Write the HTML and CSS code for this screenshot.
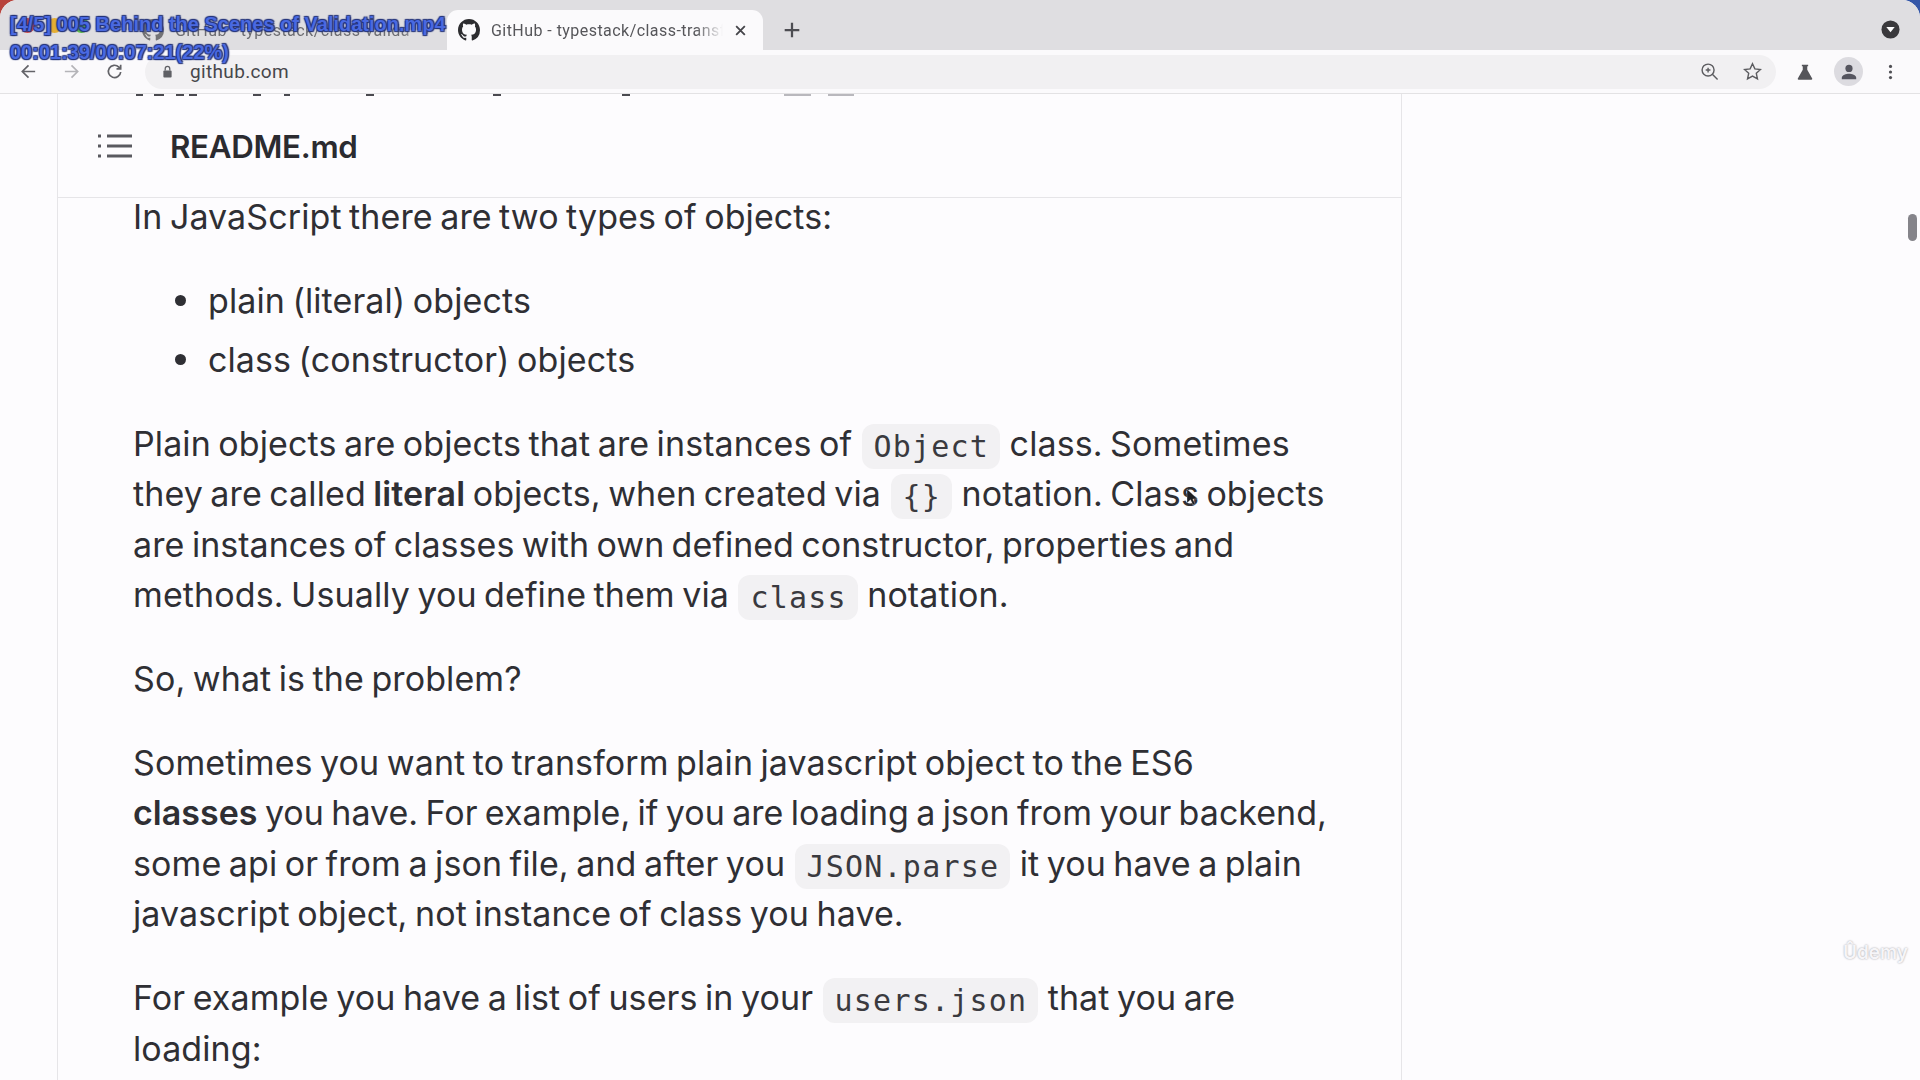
FILE: index.html
```html
<!DOCTYPE html>
<html lang="en">
<head>
    <meta charset="UTF-8">
    <title>GitHub - typestack/class-transformer</title>
    <link rel="stylesheet" href="styles.css">
</head>
<body>
    <div class="window">
        <div class="tabbar">
            <div class="lights">
                <span class="light red"></span>
                <span class="light yellow"></span>
                <span class="light green"></span>
            </div>
            <div class="tab">
                <svg class="tab-icon" viewBox="0 0 16 16"><use href="#mark"/></svg>
                <span class="tab-title">GitHub - typestack/class-valida</span>
            </div>
            <div class="tab active">
                <svg class="tab-icon" viewBox="0 0 16 16">
                    <path id="mark" d="M8 0C3.58 0 0 3.58 0 8c0 3.54 2.29 6.53 5.47 7.59.4.07.55-.17.55-.38 0-.19-.01-.82-.01-1.49-2.01.37-2.53-.49-2.69-.94-.09-.23-.48-.94-.82-1.13-.28-.15-.68-.52-.01-.53.63-.01 1.08.58 1.23.82.72 1.21 1.87.87 2.33.66.07-.52.28-.87.51-1.07-1.78-.2-3.64-.89-3.64-3.95 0-.87.31-1.59.82-2.15-.08-.2-.36-1.02.08-2.12 0 0 .67-.21 2.2.82.64-.18 1.32-.27 2-.27.68 0 1.36.09 2 .27 1.53-1.04 2.2-.82 2.2-.82.44 1.1.16 1.92.08 2.12.51.56.82 1.27.82 2.15 0 3.07-1.87 3.75-3.65 3.95.29.25.54.73.54 1.48 0 1.07-.01 1.93-.01 2.2 0 .21.15.46.55.38A8.013 8.013 0 0016 8c0-4.42-3.58-8-8-8z"/>
                </svg>
                <span class="tab-title">GitHub - typestack/class-transformer</span>
                <svg class="tab-close" viewBox="0 0 12 12"><path d="M2 2l8 8M10 2l-8 8"/></svg>
            </div>
            <svg class="new-tab" viewBox="0 0 16 16"><path d="M8 1.5v13M1.5 8h13"/></svg>
            <svg class="tab-menu" viewBox="0 0 20 20"><circle cx="10" cy="10" r="9.5"/><path d="M5.6 7.4h8.8L10 13z"/></svg>
        </div>

        <div class="toolbar">
            <svg class="nav-icon" viewBox="0 0 20 20"><path d="M17 10H4M10 3.5L3.5 10l6.5 6.5"/></svg>
            <svg class="nav-icon off" viewBox="0 0 20 20"><path d="M3 10h13M10 3.5l6.5 6.5-6.5 6.5"/></svg>
            <svg class="nav-icon" viewBox="0 0 20 20"><path d="M16.5 10.500a6.500 6.500 0 1 1-1.900-5.200L16.500 7.200M16.500 2.800v4.400h-4.400"/></svg>
            <div class="omnibox">
                <svg class="lock" viewBox="0 0 12 14"><path d="M3.500 6V4a2.500 2.500 0 0 1 5 0v2" fill="none" stroke="#5f6065" stroke-width="1.400"/><rect x="1.500" y="6" width="9" height="7.500" rx="1"/></svg>
                <span class="url">github.com</span>
                <svg class="omni-icon zoom" viewBox="0 0 20 20"><circle cx="8.500" cy="8.500" r="6.300"/><path d="M13 13l5.500 5.500M8.500 6v5M6 8.500h5"/></svg>
                <svg class="omni-icon star" viewBox="0 0 20 20"><path d="M10 1.800l2.500 5.400 5.900.700-4.400 4 1.200 5.800-5.200-2.900-5.200 2.900 1.200-5.800-4.400-4 5.900-.700z"/></svg>
            </div>
            <svg class="flask" viewBox="0 0 20 20"><path d="M6.500 2h7v1.500h-1v4L18 17.200c.3.700-.1 1.300-.8 1.300H2.800c-.7 0-1.100-.6-.8-1.300L7.500 7.500v-4h-1z"/></svg>
            <div class="avatar">
                <svg viewBox="0 0 20 20"><circle cx="10" cy="6" r="4"/><path d="M2 18v-1.500c0-3 5-4.500 8-4.500s8 1.500 8 4.500V18z"/></svg>
            </div>
            <svg class="dots" viewBox="0 0 6 20"><circle cx="3" cy="3" r="2"/><circle cx="3" cy="10" r="2"/><circle cx="3" cy="17" r="2"/></svg>
        </div>

        <div class="viewport">
            <div class="readme">
                <div class="readme-head">
                    <svg class="toc-icon" viewBox="0 0 34 26"><path d="M9 3h25M9 13h25M9 23h25M0 3h3M0 13h3M0 23h3"/></svg>
                    <span class="readme-title">README.md</span>
                </div>
                <div class="markdown">
                    <p>In JavaScript there are two types of objects:</p>
                    <ul>
                        <li>plain (literal) objects</li>
                        <li>class (constructor) objects</li>
                    </ul>
                    <p>Plain objects are objects that are instances of <code>Object</code> class. Sometimes they are called <strong>literal</strong> objects, when created via <code>{}</code> notation. Class objects are <span class="tight-line">instances of classes with own defined constructor, properties and</span> methods. Usually you define them via <code>class</code> notation.</p>
                    <p>So, what is the problem?</p>
                    <p>Sometimes you want to transform plain javascript object to the ES6<br><span class="tight-line"><strong>classes</strong> you have. For example, if you are loading a json from your backend,</span><br>some api or from a json file, and after you <code>JSON.parse</code> it you have a plain javascript object, not instance of class you have.</p>
                    <p>For example you have a list of users in your <code>users.json</code> that you are loading:</p>
                </div>
            </div>
            <!-- bottoms of the heading that scrolled under the toolbar -->
            <svg class="scrolled-bits" viewBox="0 0 730 2">
                <path d="M6 0h7v2H6zM24 0h10v2H24zM46 0h8v2h-8zM59 0h8v2h-8zM123 0h8v2h-8zM154 0h6v2h-6zM236 0h8v2h-8zM363 0h8v2h-8zM492 0h8v2h-8z"/>
                <path class="pill-bits" d="M654 0h27v2h-27zM698 0h26v2h-26z"/>
            </svg>
            <div class="scroll-thumb"></div>
        </div>
    </div>

    <div class="osd">
        <div>[4/5] 005 Behind the Scenes of Validation.mp4</div>
        <div>00:01:39/00:07:21(22%)</div>
    </div>
    <svg class="cursor" viewBox="0 0 12 18"><path d="M1 1v14l3.500-3.300L7 17l2.200-1-2.400-5H11.500z"/></svg>
    <div class="watermark">Ûdemy</div>
</body>
</html>
```
FILE: styles.css
```css
html, body {
    margin: 0;
    padding: 0;
    height: 100%;
    overflow: hidden;
}
body {
    background: linear-gradient(90deg, #b8433c 50%, #3557a8 50%);
    font-family: 'Inter', 'Liberation Sans', sans-serif;
    color: #2b2b30;
}
.window {
    height: 1080px;
    display: flex;
    flex-direction: column;
    border-radius: 18px 18px 0 0;
    overflow: hidden;
    background-color: #fdfcfe;
}
.tabbar {
    height: 50px;
    flex: none;
    display: flex;
    align-items: flex-end;
    background-color: #dfdee1;
    position: relative;
}
.lights {
    display: flex;
    gap: 12px;
    padding: 0 0 17px 20px;
    width: 111px;
}
.light {
    width: 15px;
    height: 15px;
    border-radius: 50%;
}
.light.red { background-color: #e0524c; }
.light.yellow { background-color: #e5ae33; }
.light.green { background-color: #5dbb4a; }
.tab {
    width: 316px;
    height: 40px;
    box-sizing: border-box;
    display: flex;
    align-items: center;
    padding: 0 16px 0 11px;
    gap: 11px;
    color: #6d6d72;
    overflow: hidden;
}
.tab.active {
    background-color: #fbfafc;
    border-radius: 11px 11px 0 0;
    color: #56565a;
}
.tab-icon {
    width: 22px;
    height: 22px;
    flex: none;
    fill: #2d2d30;
}
.tab .tab-icon { opacity: 0.6; }
.tab.active .tab-icon { opacity: 1; }
.tab-title {
    flex: 1;
    white-space: nowrap;
    overflow: hidden;
    font-family: 'Roboto', sans-serif;
    font-size: 16px;
    letter-spacing: 0.45px;
    -webkit-mask-image: linear-gradient(90deg, #000 88%, transparent 100%);
    mask-image: linear-gradient(90deg, #000 88%, transparent 100%);
}
.tab-close {
    width: 13px;
    height: 13px;
    flex: none;
    fill: none;
    stroke: #45454a;
    stroke-width: 1.7;
}
.new-tab {
    width: 18px;
    height: 18px;
    margin: 0 0 11px 20px;
    fill: none;
    stroke: #4d4d52;
    stroke-width: 2;
}
.tab-menu {
    width: 19px;
    height: 19px;
    margin: 0 20px 11px auto;
    fill: #fff;
}
.tab-menu circle { fill: #3a393c; }
.toolbar {
    height: 44px;
    flex: none;
    box-sizing: border-box;
    display: flex;
    align-items: center;
    background-color: #fbfafc;
    border-bottom: 1px solid #e3e2e4;
    padding-left: 19px;
}
.nav-icon {
    width: 19px;
    height: 19px;
    margin-right: 24px;
    fill: none;
    stroke: #636368;
    stroke-width: 1.8;
}
.nav-icon.off { stroke: #b4b4b8; }
.nav-icon:nth-child(3) { margin-right: 21px; }
.omnibox {
    width: 1631px;
    height: 34px;
    box-sizing: border-box;
    display: flex;
    align-items: center;
    background-color: #f1f0f2;
    border-radius: 17px;
    padding: 0 14px 0 17px;
}
.lock {
    width: 11px;
    height: 13px;
    fill: #5f6065;
    margin-right: 17px;
}
.url {
    font-family: 'Roboto', sans-serif;
    font-size: 19px;
    letter-spacing: 0.35px;
    color: #47474b;
    flex: 1;
}
.omni-icon {
    width: 19px;
    height: 19px;
    fill: none;
    stroke: #5c5c60;
    stroke-width: 1.5;
}
.omni-icon.zoom { margin-right: 24px; }
.flask {
    width: 18px;
    height: 18px;
    margin-left: 20px;
    fill: #55555a;
}
.avatar {
    width: 29px;
    height: 29px;
    margin-left: 20px;
    border-radius: 50%;
    background-color: #dcdbe0;
    display: flex;
    align-items: center;
    justify-content: center;
}
.avatar svg {
    width: 18px;
    height: 18px;
    fill: #55555f;
}
.dots {
    width: 5px;
    height: 16px;
    margin-left: 25px;
    fill: #4f4f54;
}
.viewport {
    flex: 1;
    position: relative;
    overflow: hidden;
}
.readme {
    width: 1345px;
    box-sizing: border-box;
    margin-left: 57px;
    height: 100%;
    border-left: 1px solid #e6e5e8;
    border-right: 1px solid #e6e5e8;
}
.readme-head {
    height: 104px;
    box-sizing: border-box;
    display: flex;
    align-items: center;
    padding: 2px 0 0 40px;
    border-bottom: 1px solid #e6e5e8;
}
.toc-icon {
    width: 34px;
    height: 26px;
    margin: -2px 38px 0 0;
    fill: none;
    stroke: #5a5a60;
    stroke-width: 3;
}
.readme-title {
    font-size: 31.3px;
    font-weight: 600;
    color: #2b2b30;
    letter-spacing: -0.3px;
}
.markdown {
    margin-top: -6px;
    padding: 0 62px 0 75px;
    font-size: 34px;
    line-height: 50.4px;
    letter-spacing: 0.1px;
    word-spacing: -2.2px;
    color: #2f2f34;
}
.markdown p {
    margin: 0 0 33.6px;
}
.markdown ul {
    margin: 0 0 33.6px;
    padding: 0 0 0 75px;
    list-style: none;
}
.markdown li {
    position: relative;
}
.markdown li + li {
    margin-top: 8.4px;
}
.markdown li::before {
    content: "";
    position: absolute;
    left: -33px;
    top: 19px;
    width: 11px;
    height: 11px;
    border-radius: 50%;
    background-color: #2f2f34;
}
.markdown strong {
    font-weight: 600;
}
.tight-line {
    letter-spacing: 0.02px;
}
.markdown code {
    font-family: 'DejaVu Sans Mono', monospace;
    font-size: 30px;
    line-height: 1;
    letter-spacing: 1.2px;
    word-spacing: 0;
    vertical-align: -1px;
    background-color: #f2f1f3;
    border-radius: 12px;
    padding: 5px 11px 5px 12px;
    margin: 0 2px;
    color: #3a3a3f;
}
.scrolled-bits {
    position: absolute;
    top: 0;
    left: 130px;
    width: 730px;
    height: 2px;
    fill: #4a4a50;
}
.scrolled-bits .pill-bits { fill: #b9b8bd; }
.scroll-thumb {
    position: absolute;
    top: 120px;
    right: 3px;
    width: 9px;
    height: 27px;
    border-radius: 5px;
    background-color: #85848a;
}
.osd {
    position: absolute;
    top: 10px;
    left: 10px;
    font-family: 'Liberation Sans', sans-serif;
    font-size: 20px;
    font-weight: 700;
    line-height: 28px;
    color: #4a69e0;
    text-shadow: 1px 1px 1px #22327a, -1px -1px 1px #22327a, 1px -1px 1px #22327a, -1px 1px 1px #22327a;
}
.cursor {
    position: absolute;
    left: 1186px;
    top: 488px;
    width: 12px;
    height: 18px;
    fill: #1e1e22;
    stroke: #fff;
    stroke-width: 0.3;
}
.watermark {
    position: absolute;
    left: 1843px;
    top: 941px;
    font-size: 19px;
    font-weight: 600;
    color: #f6f5f8;
    text-shadow: 0 0 2px #9a9aa0;
}
```
